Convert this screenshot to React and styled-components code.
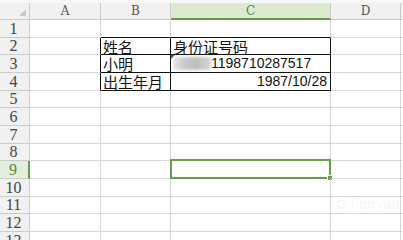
import React from "react";
import styled, { createGlobalStyle } from "styled-components";

const GlobalStyle = createGlobalStyle`
  html, body {
    margin: 0;
    padding: 0;
    background: #ffffff;
  }
  * {
    box-sizing: border-box;
  }
`;

const GRID = "#d6d6d6";
const HEAD_LINE = "#cbcbcb";
const GREEN = "#6a9a4e";
const INK = "#111111";

const columns = [
  { key: "corner", width: 30 },
  { key: "A", width: 71 },
  { key: "B", width: 70 },
  { key: "C", width: 160 },
  { key: "D", width: 70 },
  { key: "E", width: 10 },
];

const rowHeights = [18, 17, 18, 18, 17, 18, 18, 17, 18, 18, 17, 18, 18];

const data = {
  "B2": { text: "姓名" },
  "C2": { text: "身份证号码" },
  "B3": { text: "小明" },
  "C3": { text: "1198710287517", blurred: true, numeric: true },
  "B4": { text: "出生年月" },
  "C4": { text: "1987/10/28", numeric: true, right: true },
};

const inTable = (col, row) => ["B", "C"].includes(col) && row >= 2 && row <= 4;

const Page = styled.div`
  width: 403px;
  height: 240px;
  overflow: hidden;
  padding-top: 3px;
  background: #f7f7f7;
`;

const Sheet = styled.div`
  display: grid;
  grid-template-columns: ${(p) => p.$cols};
  grid-template-rows: ${(p) => p.$rows};
  background: #ffffff;
`;

const Corner = styled.div`
  position: relative;
  background: #f1f1f1;
  border-right: 1px solid ${HEAD_LINE};
  border-bottom: 1px solid ${HEAD_LINE};

  &::after {
    content: "";
    position: absolute;
    right: 3px;
    bottom: 3px;
    width: 0;
    height: 0;
    border-left: 7px solid transparent;
    border-bottom: 7px solid #c9c9c9;
  }
`;

const ColHead = styled.div`
  display: flex;
  align-items: center;
  justify-content: center;
  background: ${(p) => (p.$active ? "#dcebd0" : "#f1f1f1")};
  border-right: 1px solid ${HEAD_LINE};
  border-bottom: ${(p) => (p.$active ? `2px solid ${GREEN}` : `1px solid ${HEAD_LINE}`)};
  color: ${(p) => (p.$active ? "#5c7f47" : "#555555")};
  font-family: "DejaVu Serif", "Liberation Serif", serif;
  font-size: 12px;
  line-height: 1;
  padding-top: ${(p) => (p.$active ? "1px" : "0")};
`;

const RowHead = styled.div`
  display: flex;
  align-items: center;
  justify-content: center;
  overflow: hidden;
  padding-right: 2px;
  background: ${(p) => (p.$active ? "#e2efd9" : "#f1f1f1")};
  border-right: ${(p) => (p.$active ? `2px solid ${GREEN}` : `1px solid ${HEAD_LINE}`)};
  border-bottom: 1px solid ${HEAD_LINE};
  color: ${(p) => (p.$active ? "#5c7f47" : "#444444")};
  font-family: "Liberation Serif", "DejaVu Serif", serif;
  font-size: 16px;
  line-height: 1;
`;

const Cell = styled.div`
  position: relative;
  display: flex;
  align-items: center;
  justify-content: ${(p) => (p.$right ? "flex-end" : "flex-start")};
  padding: 0 3px 0 2px;
  border-right: 1px solid ${(p) => p.$rb};
  border-bottom: 1px solid ${(p) => p.$bb};
  color: ${INK};
  font-family: ${(p) =>
    p.$numeric
      ? `"Liberation Sans", Arial, sans-serif`
      : `"Noto Sans CJK SC", "Liberation Sans", sans-serif`};
  font-size: ${(p) => (p.$numeric ? "14px" : "15px")};
  line-height: 15px;
  white-space: nowrap;
`;

const Blur = styled.span`
  display: inline-block;
  width: 38px;
  height: 13px;
  border-radius: 3px;
  background: linear-gradient(90deg, #e8e8e8 0%, #c9c9c9 30%, #bdbdbd 60%, #d6d6d6 100%);
  filter: blur(1.5px);
`;

const ErrorMark = styled.span`
  position: absolute;
  left: 0;
  top: 0;
  width: 0;
  height: 0;
  border-top: 4px solid #3c7a2c;
  border-right: 4px solid transparent;
`;

const Selection = styled.span`
  position: absolute;
  left: -1px;
  top: -2px;
  right: -1px;
  bottom: -1px;
  border: 2px solid ${GREEN};
  pointer-events: none;
`;

const FillHandle = styled.span`
  position: absolute;
  right: -4px;
  bottom: -4px;
  width: 6px;
  height: 6px;
  background: ${GREEN};
  border: 1px solid #ffffff;
`;

const Watermark = styled.span`
  position: absolute;
  left: 5px;
  top: 18px;
  color: rgba(0, 0, 0, 0.035);
  font-family: "Liberation Sans", sans-serif;
  font-size: 14px;
  font-weight: bold;
`;

const rightColor = (col, row) => {
  if (inTable(col, row)) return INK;
  if (col === "A" && row >= 2 && row <= 4) return INK;
  return GRID;
};

const bottomColor = (col, row) => {
  if (inTable(col, row)) return INK;
  if (["B", "C"].includes(col) && row === 1) return INK;
  return GRID;
};

export default function App() {
  const cols = columns.map((c) => `${c.width}px`).join(" ");
  const rows = ["17px", ...rowHeights.map((h) => `${h}px`)].join(" ");

  return (
    <>
      <GlobalStyle />
      <Page>
        <Sheet $cols={cols} $rows={rows}>
          <Corner />
          {columns.slice(1).map((c) => (
            <ColHead key={c.key} $active={c.key === "C"}>
              {c.key === "E" ? "" : c.key}
            </ColHead>
          ))}

          {rowHeights.map((_, i) => {
            const row = i + 1;
            return (
              <React.Fragment key={row}>
                <RowHead $active={row === 9}>{row}</RowHead>
                {columns.slice(1).map((c) => {
                  const id = `${c.key}${row}`;
                  const d = data[id];
                  return (
                    <Cell
                      key={id}
                      $rb={rightColor(c.key, row)}
                      $bb={bottomColor(c.key, row)}
                      $numeric={d && d.numeric}
                      $right={d && d.right}
                    >
                      {id === "C3" && <ErrorMark />}
                      {d && d.blurred && <Blur />}
                      {d && d.text}
                      {id === "C9" && (
                        <Selection>
                          <FillHandle />
                        </Selection>
                      )}
                      {id === "D10" && <Watermark>G jingyan</Watermark>}
                    </Cell>
                  );
                })}
              </React.Fragment>
            );
          })}
        </Sheet>
      </Page>
    </>
  );
}
